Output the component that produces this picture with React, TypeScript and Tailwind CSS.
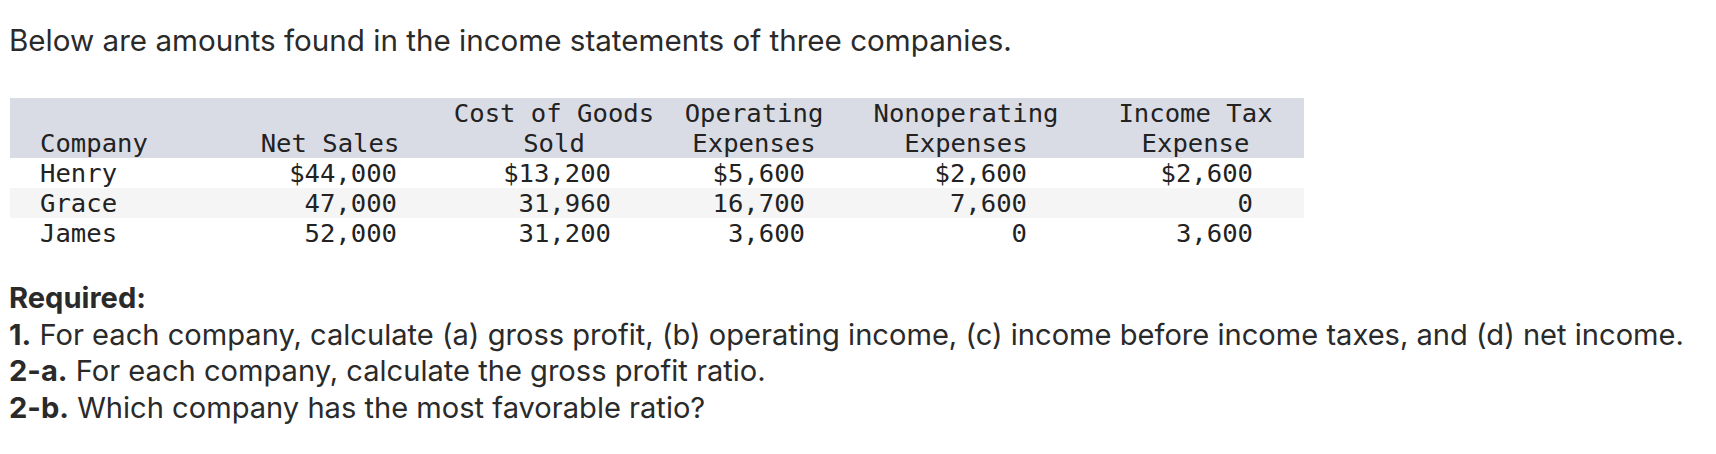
import React from "react";

type Row = { name: string; vals: string[]; shaded: boolean };

const rows: Row[] = [
  { name: "Henry", vals: ["$44,000", "$13,200", "$5,600", "$2,600", "$2,600"], shaded: false },
  { name: "Grace", vals: ["47,000", "31,960", "16,700", "7,600", "0"], shaded: true },
  { name: "James", vals: ["52,000", "31,200", "3,600", "0", "3,600"], shaded: false },
];

const pads = ["pr-[48px]", "pr-[52px]", "pr-[40px]", "pr-[60px]", "pr-[51px]"];

export default function App() {
  return (
    <div className="w-[1716px] h-[454px] bg-white text-[#2a2a2a] font-['Inter','Lato',sans-serif] overflow-hidden">
      <p className="pt-[22px] pl-[9px] text-[29.6px] leading-[36px]">
        Below are amounts found in the income statements of three companies.
      </p>

      <div className="mt-[40px] ml-[10px] w-[1294px] font-['DejaVu_Sans_Mono',monospace] text-[25.6px] leading-[30px] text-[#222]">
        <div className="grid grid-cols-[205px_230px_218px_182px_242px_217px] bg-[#d9dce5] h-[60px]">
          <div className="flex flex-col justify-end pl-[30px]">Company</div>
          <div className="flex flex-col justify-end items-center">Net Sales</div>
          <div className="flex flex-col items-center">
            <span>Cost of Goods</span>
            <span>Sold</span>
          </div>
          <div className="flex flex-col items-center">
            <span>Operating</span>
            <span>Expenses</span>
          </div>
          <div className="flex flex-col items-center">
            <span>Nonoperating</span>
            <span>Expenses</span>
          </div>
          <div className="flex flex-col items-center">
            <span>Income Tax</span>
            <span>Expense</span>
          </div>
        </div>
        {rows.map((r) => (
          <div
            key={r.name}
            className={
              "grid grid-cols-[205px_230px_218px_182px_242px_217px] h-[30px] " +
              (r.shaded ? "bg-[#f5f5f5]" : "bg-white")
            }
          >
            <div className="pl-[30px]">{r.name}</div>
            {r.vals.map((v, i) => (
              <div key={i} className={"text-right " + pads[i]}>
                {v}
              </div>
            ))}
          </div>
        ))}
      </div>

      <div className="mt-[32px] pl-[9px] text-[29.1px] leading-[36.7px]">
        <p className="font-bold">Required:</p>
        <p>
          <span className="font-bold">1.</span> For each company, calculate (a) gross profit, (b) operating income, (c) income before income taxes, and (d) net income.
        </p>
        <p>
          <span className="font-bold">2-a.</span> For each company, calculate the gross profit ratio.
        </p>
        <p>
          <span className="font-bold">2-b.</span> Which company has the most favorable ratio?
        </p>
      </div>
    </div>
  );
}
